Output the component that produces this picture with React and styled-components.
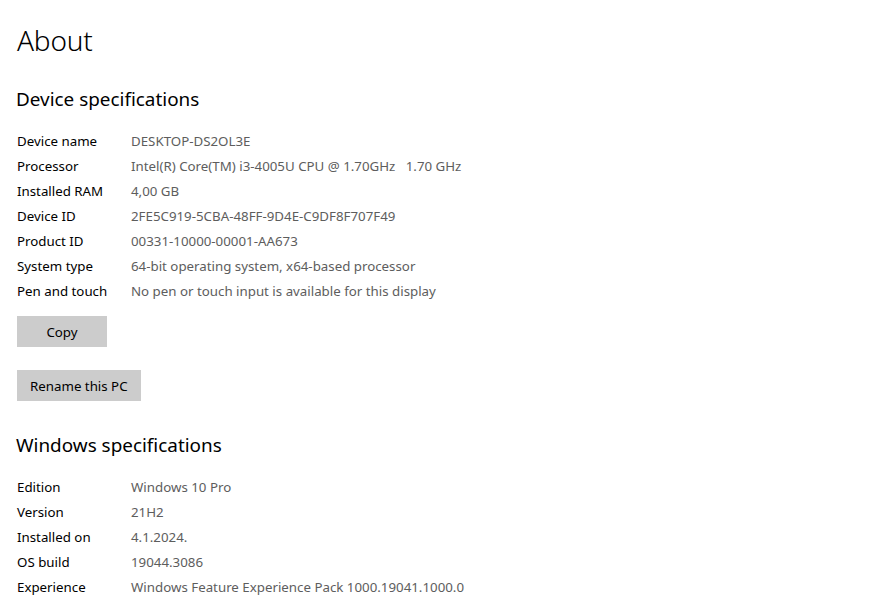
import React from "react";
import styled, { createGlobalStyle } from "styled-components";

const GlobalStyle = createGlobalStyle`
  body {
    margin: 0;
    background: #ffffff;
    font-family: "Segoe UI", "Noto Sans", sans-serif;
    color: #000000;
  }
`;

const Page = styled.div`
  padding: 20px 17px 0 17px;
  width: 874px;
  height: 609px;
  box-sizing: border-box;
  overflow: hidden;
`;

const Title = styled.h1`
  margin: 0;
  font-size: 28px;
  font-weight: 300;
  line-height: 40px;
  letter-spacing: -0.2px;
`;

const Heading = styled.h2`
  margin: ${(p) => p.$top}px 0 15px -1px;
  font-size: 18.9px;
  font-weight: 400;
  line-height: 28px;
`;

const Specs = styled.div`
  display: grid;
  grid-template-columns: 114px auto;
  grid-auto-rows: 25px;
  align-items: center;
  font-size: 13.3px;
`;

const Label = styled.div`
  color: #000000;
  white-space: nowrap;
`;

const Value = styled.div`
  color: #5d5d5d;
  white-space: pre;
`;

const Button = styled.button`
  display: block;
  height: 31px;
  min-width: 90px;
  padding: 0 13px;
  margin-top: ${(p) => p.$top}px;
  border: none;
  background: #cccccc;
  color: #000000;
  font-family: inherit;
  font-size: 13.3px;
`;

const device = [
  ["Device name", "DESKTOP-DS2OL3E"],
  ["Processor", "Intel(R) Core(TM) i3-4005U CPU @ 1.70GHz   1.70 GHz"],
  ["Installed RAM", "4,00 GB"],
  ["Device ID", "2FE5C919-5CBA-48FF-9D4E-C9DF8F707F49"],
  ["Product ID", "00331-10000-00001-AA673"],
  ["System type", "64-bit operating system, x64-based processor"],
  ["Pen and touch", "No pen or touch input is available for this display"],
];

const windows = [
  ["Edition", "Windows 10 Pro"],
  ["Version", "21H2"],
  ["Installed on", "4.1.2024."],
  ["OS build", "19044.3086"],
  ["Experience", "Windows Feature Experience Pack 1000.19041.1000.0"],
];

function SpecList({ rows }) {
  return (
    <Specs>
      {rows.map(([k, v]) => (
        <React.Fragment key={k}>
          <Label>{k}</Label>
          <Value>{v}</Value>
        </React.Fragment>
      ))}
    </Specs>
  );
}

export default function App() {
  return (
    <Page>
      <GlobalStyle />
      <Title>About</Title>
      <Heading $top={25}>Device specifications</Heading>
      <SpecList rows={device} />
      <Button $top={13}>Copy</Button>
      <Button $top={23}>Rename this PC</Button>
      <Heading $top={30}>Windows specifications</Heading>
      <SpecList rows={windows} />
    </Page>
  );
}
